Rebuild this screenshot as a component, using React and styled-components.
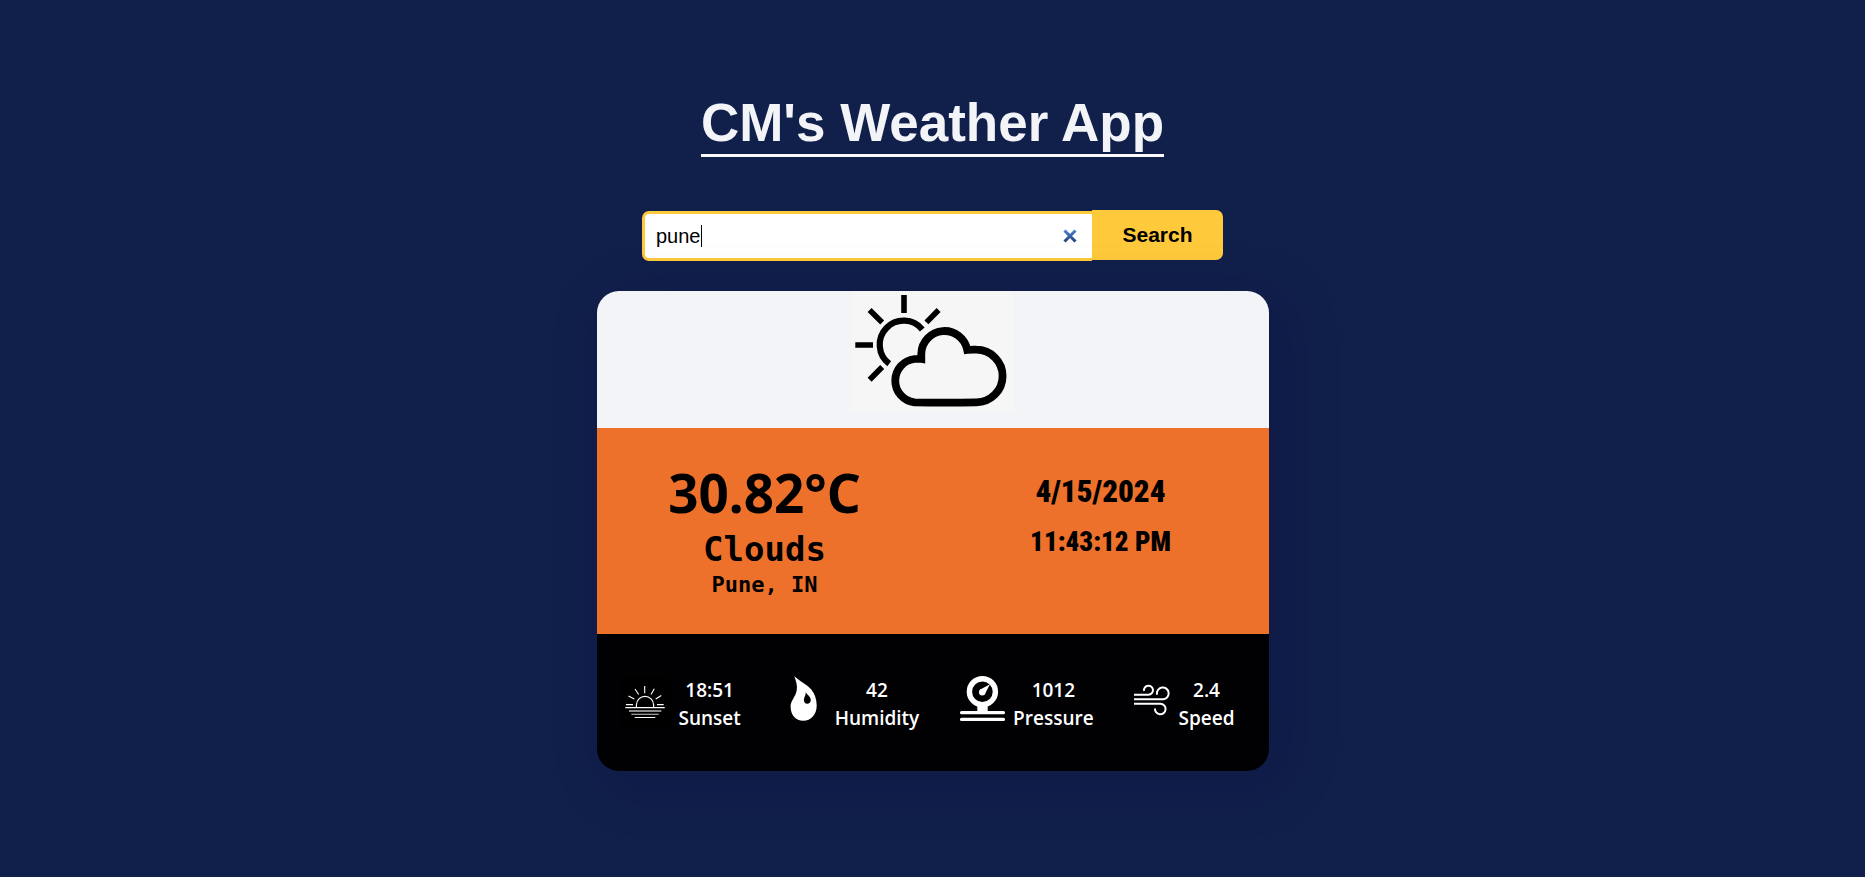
import React, { useState } from "react";
import styled, { createGlobalStyle } from "styled-components";

const GlobalStyle = createGlobalStyle`
  * { box-sizing: border-box; margin: 0; padding: 0; }
  body { margin: 0; background: #fff; font-family: Arial, "Liberation Sans", sans-serif; }
`;

const Page = styled.main`
  min-height: calc(100vh - 2px);
  padding: 92px 16px 106px;
  background: #111f4b;
  display: flex;
  flex-direction: column;
  align-items: center;
`;

const Title = styled.h1`
  font-size: 53px;
  line-height: 62px;
  font-weight: 700;
  color: #f2f4f8;
  border-bottom: 3px solid #f9f9fb;
`;

const SearchForm = styled.form`
  display: flex;
  align-items: flex-start;
  width: 100%;
  max-width: 581px;
  margin: 53px 0 30px;
`;

const SearchField = styled.label`
  flex: 1;
  height: 50px;
  margin-top: 1px;
  padding: 0 15px 0 11px;
  display: flex;
  align-items: center;
  background: #fff;
  border: 3px solid #ffc93c;
  border-right: 0;
  border-radius: 7px 0 0 7px;
  cursor: text;
`;

const SearchInput = styled.input`
  field-sizing: content;
  border: 0;
  outline: 0;
  background: transparent;
  font: 20px/22px "Liberation Sans", sans-serif;
  color: #000;
  caret-color: transparent;
`;

const Caret = styled.span`
  width: 1px;
  height: 22px;
  background: #000;
`;

const ClearButton = styled.button`
  margin-left: auto;
  width: 14px;
  height: 14px;
  border: 0;
  background: none;
  display: flex;
  cursor: pointer;
`;

const SearchButton = styled.button`
  width: 131px;
  height: 50px;
  border: 0;
  border-radius: 0 7px 7px 0;
  background: #ffc93c;
  color: #000;
  font: 700 21px "Liberation Sans", sans-serif;
  cursor: pointer;
`;

const Card = styled.section`
  width: 100%;
  max-width: 672px;
  min-height: 480px;
  display: grid;
  grid-template-rows: 2fr 3fr 2fr;
  border-radius: 22px;
  overflow: hidden;
  box-shadow: 13px 11px 60px rgba(8, 8, 56, 0.2);
`;

const IconPanel = styled.div`
  display: flex;
  justify-content: center;
  align-items: flex-start;
  background: #f2f4f8;
`;

const WeatherPanel = styled.div`
  display: grid;
  grid-template-columns: 1fr 1fr;
  background: #ee712b;
  color: #000;
`;

const Summary = styled.div`
  padding-top: 32px;
  text-align: center;
`;

const Temperature = styled.h2`
  font: 700 53px/66px "Noto Sans", sans-serif;
  margin-bottom: 3px;
`;

const Condition = styled.p`
  font: 700 34px/40px "DejaVu Sans Mono", monospace;
`;

const Place = styled.p`
  font: 700 22px/32px "DejaVu Sans Mono", monospace;
`;

const Clock = styled.div`
  padding-top: 38px;
  text-align: center;
`;

const ClockLine = styled.time`
  display: block;
  font-family: Impact, "Roboto Condensed", "Liberation Sans", sans-serif;
  font-weight: 900;
  font-size: ${(p) => p.$size}px;
  line-height: 51px;
`;

const Details = styled.dl`
  padding: 42px 34px 0 22px;
  display: flex;
  justify-content: space-between;
  align-items: flex-start;
  background: #010103;
  color: #fff;
`;

const Detail = styled.div`
  display: flex;
  gap: 8px;
`;

const DetailText = styled.div`
  display: flex;
  flex-direction: column-reverse;
  text-align: center;
  font: 600 19px/28px "Open Sans", sans-serif;
`;

const PartlyCloudyIcon = () => (
  <svg width="163" height="120" viewBox="0 0 163 120" fill="none" stroke="#000" role="img" aria-label="Clouds">
    <rect width="163" height="120" fill="#f6f6f6" stroke="none" />
    <g strokeWidth="5.6">
      <path d="M53 4V22M4.3 54H22" />
      <path d="M18.6 19L31.2 31.4M87.6 19L75.4 31.4M31.2 76L18.6 88.8" />
    </g>
    <path strokeWidth="6.2" d="M71.3 38.5A24 24 0 1 0 38.2 72.8" />
    <path
      strokeWidth="7.8"
      d="M63.5 111.3A21.8 21.8 0 0 1 63.5 68Q67 67.6 70.3 68V62.5A23.2 23.2 0 0 1 116.3 59Q121 58.4 125.3 58.7A26.3 26.3 0 0 1 125.3 111.3Q95 112 63.5 111.3Z"
    />
  </svg>
);

const SunsetIcon = () => (
  <svg width="52" height="52" viewBox="0 0 52 52" fill="none" stroke="#fff" aria-hidden="true">
    <rect width="52" height="52" fill="#000" stroke="none" />
    <path strokeWidth="1.2" d="M17.4 31V29a8.6 8.6 0 0 1 17.2 0V31" />
    <path strokeWidth="1.1" d="M25.7 10v7.3M16 13l3.7 5.5M35.3 12.8L32 18.5M9.5 20l5.8 3M42.3 19.5L36.7 23M7 28.6h7M38 28.6h6.7" />
    <path strokeWidth="1.4" d="M6.3 31.6H45.7" />
    <path strokeWidth="1.7" stroke="#bbb" d="M10 35H42.3" />
    <path strokeWidth="1.1" stroke="#ccc" d="M12.3 38.3H39.7" />
    <path strokeWidth="1.2" d="M15.7 41.5H36.3" />
  </svg>
);

const HumidityIcon = () => (
  <svg width="45" height="45" viewBox="0 0 45 45" aria-hidden="true">
    <path
      fill="#fff"
      d="M12.3.3C18 5.5 25 8.5 29.3 13.5C32.5 17.5 34.7 23 34.7 29.5C34.7 38.5 29 44.8 21.3 44.8C13.6 44.8 8.6 39 8.6 30.5C8.6 24.5 13.5 21 14.7 14.5C15.6 9.5 14 5 12.3.3Z"
    />
    <path fill="#000" d="M23.7 16.3C25.2 19 28.8 20.5 28.8 24C28.8 26.3 27.2 27.7 25.2 27.7C23 27.7 21.7 26 21.9 23.5C22.1 21 24 19.5 23.7 16.3Z" />
  </svg>
);

const PressureIcon = () => (
  <svg width="45" height="45" viewBox="0 0 45 45" fill="#fff" aria-hidden="true">
    <circle cx="22.4" cy="15.7" r="13" fill="none" stroke="#fff" strokeWidth="5.4" />
    <path d="M17.3 28H27.7V36H17.3Z" />
    <rect y="35" width="45" height="3.2" rx="1.5" />
    <rect y="41.7" width="45" height="3.2" rx="1.5" />
    <circle cx="22.2" cy="16.2" r="3.2" />
    <path d="M19.8 13.8L30 8.2L24.6 18.4Z" />
  </svg>
);

const WindIcon = () => (
  <svg width="36" height="45" viewBox="0 0 36 45" fill="none" stroke="#fff" strokeWidth="2" aria-hidden="true">
    <path d="M0 18.7H14.5A4.5 4.5 0 1 0 10 14.8" />
    <path d="M0 23.2H29.3A5.9 5.9 0 1 0 23 18.5V17.5" />
    <path d="M0 27.7H26.5A5.3 5.3 0 1 1 21 32.5" />
  </svg>
);

const details = [
  { label: "Sunset", value: "18:51", Icon: SunsetIcon },
  { label: "Humidity", value: "42", Icon: HumidityIcon },
  { label: "Pressure", value: "1012", Icon: PressureIcon },
  { label: "Speed", value: "2.4", Icon: WindIcon },
];

export default function App() {
  const [query, setQuery] = useState("pune");

  return (
    <>
      <GlobalStyle />
      <Page>
        <Title>CM's Weather App</Title>
        <SearchForm onSubmit={(e) => e.preventDefault()}>
          <SearchField>
            <SearchInput
              type="text"
              aria-label="City"
              value={query}
              onChange={(e) => setQuery(e.target.value)}
            />
            <Caret />
            <ClearButton type="button" aria-label="Clear" onClick={() => setQuery("")}>
              <svg width="14" height="14" viewBox="0 0 14 14" fill="none" stroke="url(#clear)" strokeWidth="3">
                <defs>
                  <linearGradient id="clear" x1="0" y1="0" x2="0" y2="1">
                    <stop offset="0" stopColor="#4a7fd0" />
                    <stop offset="1" stopColor="#24427c" />
                  </linearGradient>
                </defs>
                <path d="M1.5 1.5L12.5 12.5M12.5 1.5L1.5 12.5" />
              </svg>
            </ClearButton>
          </SearchField>
          <SearchButton type="submit">Search</SearchButton>
        </SearchForm>
        <Card>
          <IconPanel>
            <PartlyCloudyIcon />
          </IconPanel>
          <WeatherPanel>
            <Summary>
              <Temperature>30.82°C</Temperature>
              <Condition>Clouds</Condition>
              <Place>Pune, IN</Place>
            </Summary>
            <Clock>
              <ClockLine $size={31}>4/15/2024</ClockLine>
              <ClockLine $size={27}>11:43:12 PM</ClockLine>
            </Clock>
          </WeatherPanel>
          <Details>
            {details.map(({ label, value, Icon }) => (
              <Detail key={label}>
                <Icon />
                <DetailText>
                  <dt>{label}</dt>
                  <dd>{value}</dd>
                </DetailText>
              </Detail>
            ))}
          </Details>
        </Card>
      </Page>
    </>
  );
}
